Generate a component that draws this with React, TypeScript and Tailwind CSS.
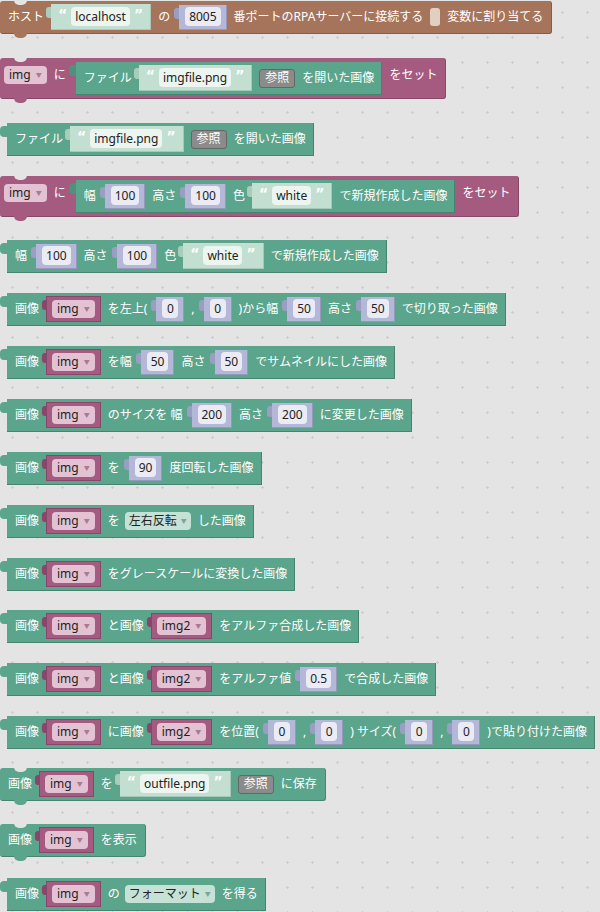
import type { ReactNode } from "react";

type Hue = "green" | "purple" | "brown";

const blockBg: Record<Hue, string> = {
  green: "bg-[#5ba58c] border-[#47846f]",
  purple: "bg-[#a55b80] border-[#854866]",
  brown: "bg-[#a5745b] border-[#855c47]",
};
const tabBg: Record<Hue, string> = {
  green: "bg-[#5ba58c]",
  purple: "bg-[#a55b80]",
  brown: "bg-[#a5745b]",
};

// white label text on a block
function L({ t }: { t: string }) {
  return <span className="text-[12px] leading-none text-white">{t}</span>;
}

// label wrapper for tall (inline-input) blocks so the text sits on the first row
function Row({ children }: { children: ReactNode }) {
  return <span className="flex h-[26px] items-center">{children}</span>;
}

// statement block: notch on top, tab below
function Statement({ hue, tall, className = "", children }: { hue: Hue; tall?: boolean; className?: string; children: ReactNode }) {
  return (
    <div
      className={`relative flex gap-[7px] whitespace-nowrap rounded-[3px] border-r border-b pr-[8px] ${blockBg[hue]} ${
        tall ? "items-start pt-[4px] pb-[3px] pl-[4px]" : "h-[33px] items-center pl-[8px]"
      } ${className}`}
    >
      <span className="absolute -top-px left-[14px] h-[5px] w-[13px] rounded-b-[5px] bg-[#e4e4e4]" />
      <span className={`absolute -bottom-[5px] left-[14px] h-[5px] w-[13px] rounded-b-[5px] ${tabBg[hue]}`} />
      {children}
    </div>
  );
}

// value (reporter) block with an output tab on the left
function Value({ nested, className = "", children }: { nested?: boolean; className?: string; children: ReactNode }) {
  return (
    <div
      className={`relative flex h-[33px] items-center gap-[7px] whitespace-nowrap border-r border-b border-[#47846f] bg-[#5ba58c] pl-[8px] pr-[7px] ${
        nested ? "ml-[3px]" : "ml-[7px]"
      } ${className}`}
    >
      <span className={`absolute top-[3px] -left-[7px] h-[11px] w-[7px] rounded-l-[4px] ${nested ? "bg-[#4f917b]" : "bg-[#5ba58c]"}`} />
      {children}
    </div>
  );
}

function VarField({ name }: { name: string }) {
  return (
    <span className="flex h-[18px] items-center gap-[5px] rounded-[4px] bg-[#e3c2d3] px-[5px] text-[12px] leading-none text-[#222]">
      {name}
      <span className="text-[6px] text-[#a57c90]">▼</span>
    </span>
  );
}

function Var({ name }: { name: string }) {
  return (
    <span className="relative flex h-[26px] items-center border border-[#87466a] bg-[#a55b80] px-[5px]">
      <span className="absolute top-[3px] -left-[5px] h-[10px] w-[5px] rounded-l-[3px] bg-[#87466a]" />
      <VarField name={name} />
    </span>
  );
}

function Num({ v }: { v: string }) {
  return (
    <span className="relative ml-[2px] flex h-[25px] items-center border-r border-b border-[#9598bb] bg-[#b4b7d7] pl-[6px] pr-[5px]">
      <span className="absolute top-[3px] -left-[5px] h-[11px] w-[5px] rounded-l-[3px] bg-[#9a9ec3]" />
      <span className="flex h-[19px] min-w-[16px] items-center justify-center rounded-[4px] bg-[#ebebf4] px-[4px] text-[12px] leading-none text-[#222]">
        {v}
      </span>
    </span>
  );
}

function Quote({ c }: { c: string }) {
  return <span className="-mt-[6px] font-['DejaVu_Sans',sans-serif] text-[14px] font-bold leading-none text-white">{c}</span>;
}

function Str({ v }: { v: string }) {
  return (
    <span className="relative flex h-[26px] items-center gap-[4px] border-r border-b border-[#a5c8b8] bg-[#c3dfd2] pl-[7px] pr-[7px]">
      <span className="absolute top-[3px] -left-[5px] h-[11px] w-[5px] rounded-l-[3px] bg-[#a9cdbd]" />
      <Quote c="“" />
      <span className="flex h-[19px] items-center rounded-[4px] bg-[#ecf5f0] px-[4px] text-[12px] leading-none text-[#222]">{v}</span>
      <Quote c="”" />
    </span>
  );
}

function Btn() {
  return (
    <span className="flex h-[19px] items-center rounded-[3px] border border-[#666] bg-[#8b8b8b] px-[5px] text-[12px] leading-none text-white">
      参照
    </span>
  );
}

function Drop({ t }: { t: string }) {
  return (
    <span className="-ml-[2px] flex h-[18px] items-center gap-[4px] rounded-[4px] bg-[#c6e2d6] px-[4px] text-[12px] leading-none text-[#222]">
      {t}
      <span className="text-[6px] text-[#7fa595]">▼</span>
    </span>
  );
}

function Img() {
  return (
    <>
      <L t="画像" />
      <Var name="img" />
    </>
  );
}

export default function App() {
  return (
    <div className="h-[912px] w-[600px] overflow-hidden bg-[#e4e4e4] bg-[radial-gradient(circle,#cdcdcd_1px,transparent_1.4px)] bg-[length:25px_25px] font-['Noto_Sans','Noto_Sans_CJK_JP',sans-serif]">
      <div className="flex flex-col items-start">
        {/* RPA server */}
        <Statement hue="brown" className="mt-px">
          <L t="ホスト" />
          <Str v="localhost" />
          <L t="の" />
          <Num v="8005" />
          <L t="番ポートのRPAサーバーに接続する" />
          <span className="h-[18px] w-[10px] rounded-[3px] bg-[#e2cfc4]" />
          <L t="変数に割り当てる" />
        </Statement>

        <Statement hue="purple" tall className="mt-[24px]">
          <Row>
            <VarField name="img" />
          </Row>
          <Row>
            <L t="に" />
          </Row>
          <Value nested>
            <L t="ファイル" />
            <Str v="imgfile.png" />
            <Btn />
            <L t="を開いた画像" />
          </Value>
          <Row>
            <L t="をセット" />
          </Row>
        </Statement>

        <Value className="mt-[24px] h-[32px]">
          <L t="ファイル" />
          <Str v="imgfile.png" />
          <Btn />
          <L t="を開いた画像" />
        </Value>

        <Statement hue="purple" tall className="mt-[20px]">
          <Row>
            <VarField name="img" />
          </Row>
          <Row>
            <L t="に" />
          </Row>
          <Value nested>
            <L t="幅" />
            <Num v="100" />
            <L t="高さ" />
            <Num v="100" />
            <L t="色" />
            <Str v="white" />
            <L t="で新規作成した画像" />
          </Value>
          <Row>
            <L t="をセット" />
          </Row>
        </Statement>

        <Value className="mt-[23px]">
          <L t="幅" />
          <Num v="100" />
          <L t="高さ" />
          <Num v="100" />
          <L t="色" />
          <Str v="white" />
          <L t="で新規作成した画像" />
        </Value>

        <Value className="mt-[20px]">
          <Img />
          <L t="を左上(" />
          <Num v="0" />
          <L t="," />
          <Num v="0" />
          <L t=")から幅" />
          <Num v="50" />
          <L t="高さ" />
          <Num v="50" />
          <L t="で切り取った画像" />
        </Value>

        <Value className="mt-[20px]">
          <Img />
          <L t="を幅" />
          <Num v="50" />
          <L t="高さ" />
          <Num v="50" />
          <L t="でサムネイルにした画像" />
        </Value>

        <Value className="mt-[20px]">
          <Img />
          <L t="のサイズを 幅" />
          <Num v="200" />
          <L t="高さ" />
          <Num v="200" />
          <L t="に変更した画像" />
        </Value>

        <Value className="mt-[20px]">
          <Img />
          <L t="を" />
          <Num v="90" />
          <L t="度回転した画像" />
        </Value>

        <Value className="mt-[20px]">
          <Img />
          <L t="を" />
          <Drop t="左右反転" />
          <L t="した画像" />
        </Value>

        <Value className="mt-[20px]">
          <Img />
          <L t="をグレースケールに変換した画像" />
        </Value>

        <Value className="mt-[19px]">
          <Img />
          <L t="と画像" />
          <Var name="img2" />
          <L t="をアルファ合成した画像" />
        </Value>

        <Value className="mt-[20px]">
          <Img />
          <L t="と画像" />
          <Var name="img2" />
          <L t="をアルファ値" />
          <Num v="0.5" />
          <L t="で合成した画像" />
        </Value>

        <Value className="mt-[20px]">
          <Img />
          <L t="に画像" />
          <Var name="img2" />
          <L t="を位置(" />
          <Num v="0" />
          <L t="," />
          <Num v="0" />
          <L t=") サイズ(" />
          <Num v="0" />
          <L t="," />
          <Num v="0" />
          <L t=")で貼り付けた画像" />
        </Value>

        <Statement hue="green" className="mt-[19px]">
          <Img />
          <L t="を" />
          <Str v="outfile.png" />
          <Btn />
          <L t="に保存" />
        </Statement>

        <Statement hue="green" className="mt-[23px]">
          <Img />
          <L t="を表示" />
        </Statement>

        <Value className="mt-[21px]">
          <Img />
          <L t="の" />
          <Drop t="フォーマット" />
          <L t="を得る" />
        </Value>
      </div>
    </div>
  );
}
